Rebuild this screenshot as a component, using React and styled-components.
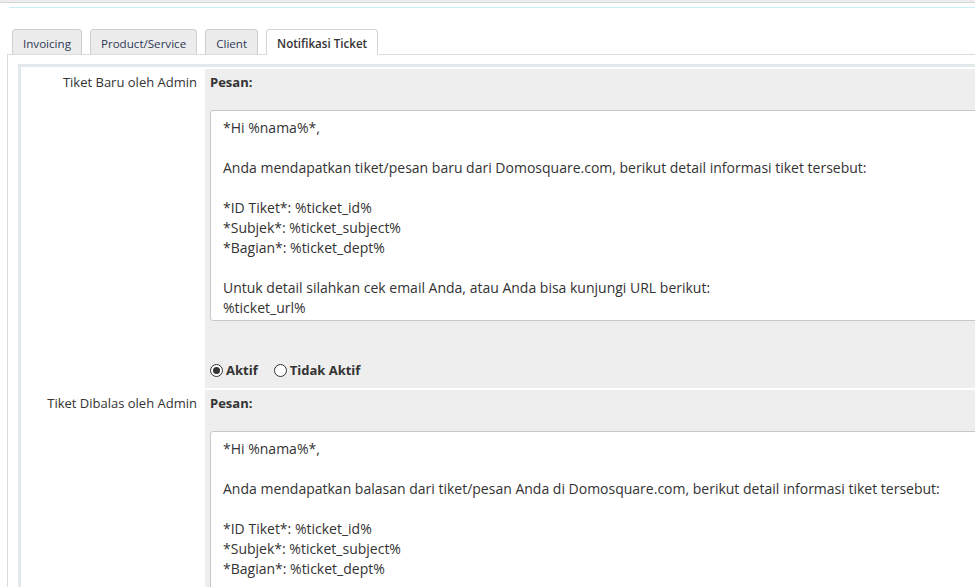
import styled, { createGlobalStyle } from "styled-components";

const GlobalStyle = createGlobalStyle`
  html, body {
    margin: 0;
    padding: 0;
    overflow: hidden;
    background: #fff;
    font-family: "Open Sans", "Liberation Sans", sans-serif;
    color: #333;
  }
`;

const Page = styled.div`
  width: 1300px;
`;

const TopBar = styled.div`
  height: 2px;
  background: #ececec;
  border-bottom: 1px solid #d6d6d6;
`;

const TopAccent = styled.div`
  margin: 4px 0 0 9px;
  height: 1px;
  background: #c8eef2;
`;

const Container = styled.div`
  margin: 21px 0 0 7px;
`;

const TabNav = styled.ul`
  display: flex;
  gap: 8px;
  list-style: none;
  margin: 0;
  padding: 0 0 0 5px;
  position: relative;
  z-index: 1;
`;

const Tab = styled.li`
  height: 24px;
  line-height: 27px;
  padding: 0 10px;
  font-size: 11.6px;
  border: 1px solid ${(p) => (p.$active ? "#d4d4d4" : "#cdcdcd")};
  border-bottom: ${(p) => (p.$active ? "1px solid #fff" : "none")};
  border-radius: 4px 4px 0 0;
  background: ${(p) => (p.$active ? "#fff" : "#ececec")};
  color: ${(p) => (p.$active ? "#333" : "#2d3a55")};
  font-weight: ${(p) => (p.$active ? 600 : 400)};
  margin-bottom: ${(p) => (p.$active ? "-1px" : "0")};
  cursor: pointer;
`;

const TabContent = styled.div`
  border-top: 1px solid #dcdcdc;
  border-left: 1px solid #dcdcdc;
  padding: 9px 0 0 10px;
`;

const Box = styled.div`
  border: 3px solid #e3e8eb;
  border-right: none;
  display: grid;
  grid-template-columns: 182px 1fr;
  gap: 2px;
  padding: 2px 0 0 0;
`;

const Label = styled.div`
  text-align: right;
  padding: 4px 6px 0 0;
  font-size: 13px;
  line-height: 18px;
  color: #333;
`;

const Cell = styled.div`
  background: #eeeeee;
  padding: 4px 6px 8px 5px;
`;

const FieldTitle = styled.div`
  font-size: 13px;
  font-weight: 700;
  line-height: 18px;
  color: #333;
  margin-bottom: 19px;
`;

const Message = styled.textarea`
  display: block;
  box-sizing: border-box;
  width: 1000px;
  height: 211px;
  padding: 7px 12px;
  border: 1px solid #c8c8c8;
  border-radius: 3px;
  background: #fff;
  font-family: "Open Sans", "Liberation Sans", sans-serif;
  font-size: 14px;
  line-height: 20px;
  color: #333;
  resize: none;
  overflow: hidden;
  outline: none;
`;

const RadioGroup = styled.div`
  display: flex;
  align-items: center;
  gap: 16px;
  margin-top: 39px;
`;

const RadioLabel = styled.label`
  display: flex;
  align-items: center;
  gap: 3px;
  font-size: 13px;
  font-weight: 700;
  line-height: 20px;
  color: #333;
`;

const RadioDot = styled.span`
  box-sizing: border-box;
  width: 13px;
  height: 13px;
  border-radius: 50%;
  border: 1px solid #333;
  background: #fff;
  display: flex;
  align-items: center;
  justify-content: center;
  &::after {
    content: "";
    width: 7px;
    height: 7px;
    border-radius: 50%;
    background: ${(p) => (p.$checked ? "#333" : "transparent")};
  }
`;

const newTicket = `*Hi %nama%*,

Anda mendapatkan tiket/pesan baru dari Domosquare.com, berikut detail informasi tiket tersebut:

*ID Tiket*: %ticket_id%
*Subjek*: %ticket_subject%
*Bagian*: %ticket_dept%

Untuk detail silahkan cek email Anda, atau Anda bisa kunjungi URL berikut:
%ticket_url%`;

const replyTicket = `*Hi %nama%*,

Anda mendapatkan balasan dari tiket/pesan Anda di Domosquare.com, berikut detail informasi tiket tersebut:

*ID Tiket*: %ticket_id%
*Subjek*: %ticket_subject%
*Bagian*: %ticket_dept%

Untuk detail silahkan cek email Anda, atau Anda bisa kunjungi URL berikut:
%ticket_url%`;

const tabs = ["Invoicing", "Product/Service", "Client", "Notifikasi Ticket"];

const rows = [
  { label: "Tiket Baru oleh Admin", text: newTicket, active: true },
  { label: "Tiket Dibalas oleh Admin", text: replyTicket, active: true },
];

const App = () => {
  return (
    <Page>
      <GlobalStyle />
      <TopBar />
      <TopAccent />
      <Container>
        <TabNav>
          {tabs.map((t) => (
            <Tab key={t} $active={t === "Notifikasi Ticket"}>
              {t}
            </Tab>
          ))}
        </TabNav>
        <TabContent>
          <Box>
            {rows.map((r, i) => (
              <>
                <Label key={"l" + i}>{r.label}</Label>
                <Cell key={"c" + i}>
                  <FieldTitle>Pesan:</FieldTitle>
                  <Message readOnly defaultValue={r.text} />
                  <RadioGroup>
                    <RadioLabel>
                      <RadioDot $checked={r.active} />
                      Aktif
                    </RadioLabel>
                    <RadioLabel>
                      <RadioDot $checked={!r.active} />
                      Tidak Aktif
                    </RadioLabel>
                  </RadioGroup>
                </Cell>
              </>
            ))}
          </Box>
        </TabContent>
      </Container>
    </Page>
  );
};

export default App;
